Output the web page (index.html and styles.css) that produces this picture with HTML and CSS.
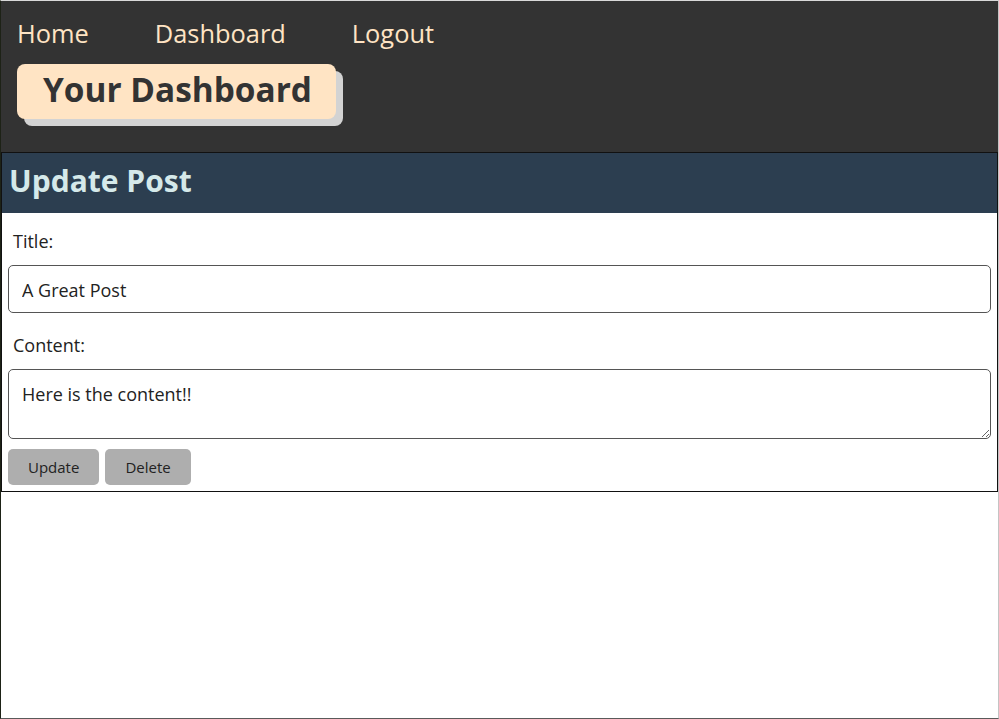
FILE: index.html
```html
<!DOCTYPE html>
<html lang="en">
<head>
<meta charset="utf-8">
<title>Your Dashboard</title>
<link rel="stylesheet" href="styles.css">
</head>
<body>
<div class="frame">
  <header class="site-header">
    <nav class="nav">
      <a href="#" class="nav-link">Home</a>
      <a href="#" class="nav-link">Dashboard</a>
      <a href="#" class="nav-link">Logout</a>
    </nav>
    <h1 class="badge">Your Dashboard</h1>
  </header>
  <section class="card">
    <h2 class="card-title">Update Post</h2>
    <form class="form">
      <label class="label" for="title">Title:</label>
      <input class="field" id="title" type="text" value="A Great Post">
      <label class="label" for="content">Content:</label>
      <textarea class="field area" id="content">Here is the content!!</textarea>
      <div class="actions">
        <button type="button" class="btn">Update</button>
        <button type="button" class="btn">Delete</button>
      </div>
    </form>
  </section>
</div>
</body>
</html>
```
FILE: styles.css
```css
* { box-sizing: border-box; }
html, body { margin: 0; padding: 0; }
body {
  font-family: "Open Sans", "Noto Sans", sans-serif;
  color: #222;
  background: #fff;
}
.frame {
  width: 999px;
  height: 719px;
  border-top: 1px solid #d9d9d9;
  border-left: 1px solid #1d2216;
  border-right: 1px solid #c4c4c4;
  border-bottom: 1px solid #5a5a5a;
  background: #fff;
  overflow: hidden;
}
.site-header {
  background: #333333;
  height: 151px;
  padding: 15px 16px 0;
}
.nav {
  display: flex;
  gap: 66px;
}
.nav-link {
  color: #ffe4c4;
  text-decoration: none;
  font-size: 25.4px;
  line-height: 34px;
}
.badge {
  display: inline-block;
  margin: 14px 0 0;
  background: #ffe4c4;
  color: #333;
  font-size: 33.4px;
  font-weight: 700;
  line-height: 45px;
  padding: 3px 24px 7px 26px;
  border-radius: 8px;
  box-shadow: 7px 7px 0 #d3d3d3;
}
.card {
  border: 1px solid #111;
}
.card-title {
  margin: 0;
  background: #2c3e50;
  color: #d5e9ea;
  font-size: 30px;
  font-weight: 700;
  line-height: 40px;
  padding: 8px 7px 12px;
}
.form {
  display: flex;
  flex-direction: column;
  padding: 16px 6px 6px;
}
.label {
  font-size: 18px;
  line-height: 24px;
  padding-left: 5px;
  margin-bottom: 12px;
  color: #222;
}
.field {
  font-family: inherit;
  font-size: 18px;
  color: #222;
  border: 1px solid #555;
  border-radius: 5px;
  padding: 2px 13px 0;
  height: 48px;
  margin: 0 0 20px;
  width: 100%;
  background: #fff;
}
.area {
  height: 70px;
  padding: 12px 13px 8px;
  margin-bottom: 10px;
  line-height: 24px;
  resize: vertical;
}
.actions {
  display: flex;
  gap: 6px;
}
.btn {
  font-family: inherit;
  font-size: 15px;
  color: #222;
  background: #aeaeae;
  border: none;
  border-radius: 5px;
  height: 36px;
  padding: 0 20px;
}
```
